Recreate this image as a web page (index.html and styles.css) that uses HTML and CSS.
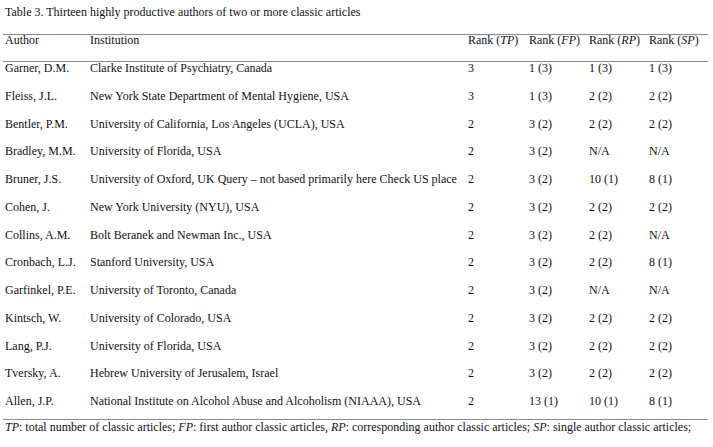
FILE: index.html
```html
<!DOCTYPE html>
<html>
<head>
<meta charset="utf-8">
<link rel="stylesheet" href="styles.css">
</head>
<body>
<div class="page">
  <p class="caption">Table 3. Thirteen highly productive authors of two or more classic articles</p>
  <table class="authors">
    <colgroup>
      <col class="c-author"><col class="c-inst"><col class="c-tp"><col class="c-fp"><col class="c-rp"><col class="c-sp">
    </colgroup>
    <thead>
      <tr><th>Author</th><th>Institution</th><th>Rank (<i>TP</i>)</th><th>Rank (<i>FP</i>)</th><th>Rank (<i>RP</i>)</th><th>Rank (<i>SP</i>)</th></tr>
    </thead>
    <tbody>
      <tr><td>Garner, D.M.</td><td>Clarke Institute of Psychiatry, Canada</td><td>3</td><td>1 (3)</td><td>1 (3)</td><td>1 (3)</td></tr>
      <tr><td>Fleiss, J.L.</td><td>New York State Department of Mental Hygiene, USA</td><td>3</td><td>1 (3)</td><td>2 (2)</td><td>2 (2)</td></tr>
      <tr><td>Bentler, P.M.</td><td>University of California, Los Angeles (UCLA), USA</td><td>2</td><td>3 (2)</td><td>2 (2)</td><td>2 (2)</td></tr>
      <tr><td>Bradley, M.M.</td><td>University of Florida, USA</td><td>2</td><td>3 (2)</td><td>N/A</td><td>N/A</td></tr>
      <tr><td>Bruner, J.S.</td><td>University of Oxford, UK Query – not based primarily here Check US place</td><td>2</td><td>3 (2)</td><td>10 (1)</td><td>8 (1)</td></tr>
      <tr><td>Cohen, J.</td><td>New York University (NYU), USA</td><td>2</td><td>3 (2)</td><td>2 (2)</td><td>2 (2)</td></tr>
      <tr><td>Collins, A.M.</td><td>Bolt Beranek and Newman Inc., USA</td><td>2</td><td>3 (2)</td><td>2 (2)</td><td>N/A</td></tr>
      <tr><td>Cronbach, L.J.</td><td>Stanford University, USA</td><td>2</td><td>3 (2)</td><td>2 (2)</td><td>8 (1)</td></tr>
      <tr><td>Garfinkel, P.E.</td><td>University of Toronto, Canada</td><td>2</td><td>3 (2)</td><td>N/A</td><td>N/A</td></tr>
      <tr><td>Kintsch, W.</td><td>University of Colorado, USA</td><td>2</td><td>3 (2)</td><td>2 (2)</td><td>2 (2)</td></tr>
      <tr><td>Lang, P.J.</td><td>University of Florida, USA</td><td>2</td><td>3 (2)</td><td>2 (2)</td><td>2 (2)</td></tr>
      <tr><td>Tversky, A.</td><td>Hebrew University of Jerusalem, Israel</td><td>2</td><td>3 (2)</td><td>2 (2)</td><td>2 (2)</td></tr>
      <tr class="last"><td>Allen, J.P.</td><td>National Institute on Alcohol Abuse and Alcoholism (NIAAA), USA</td><td>2</td><td>13 (1)</td><td>10 (1)</td><td>8 (1)</td></tr>
    </tbody>
  </table>
  <p class="note"><i>TP</i>: total number of classic articles; <i>FP</i>: first author classic articles, <i>RP</i>: corresponding author classic articles; <i>SP</i>: single author classic articles;</p>
</div>
</body>
</html>
```

FILE: styles.css
```css
html, body {
  margin: 0;
  padding: 0;
  background: #ffffff;
}
body {
  width: 713px;
  height: 447px;
  overflow: hidden;
  font-family: "Liberation Serif", "Times New Roman", serif;
  font-size: 12px;
  color: #111111;
}
.page {
  padding-left: 3px;
}
.caption {
  margin: 0;
  padding: 6px 0 0 2px;
  line-height: 12px;
  height: 28px;
  white-space: nowrap;
}
.authors {
  border-collapse: separate;
  border-spacing: 0;
  table-layout: fixed;
  width: 705px;
}
.c-author { width: 85px; }
.c-inst { width: 378px; }
.c-tp { width: 61px; }
.c-fp { width: 60px; }
.c-rp { width: 60px; }
.c-sp { width: 61px; }
.authors th,
.authors td {
  padding: 0 0 0 2px;
  text-align: left;
  vertical-align: top;
  font-weight: normal;
  white-space: nowrap;
}
.authors th {
  border-top: 1px solid #8a8a8a;
  border-bottom: 1px solid #8a8a8a;
  line-height: 10px;
  height: 28px;
  box-sizing: border-box;
}
.authors td {
  line-height: 12px;
  height: 27.75px;
  box-sizing: border-box;
}
.authors tr.last td {
  height: 25px;
  border-bottom: 1px solid #8a8a8a;
}
.note {
  margin: 0;
  padding: 1px 0 0 2px;
  line-height: 12px;
  white-space: nowrap;
}
```
